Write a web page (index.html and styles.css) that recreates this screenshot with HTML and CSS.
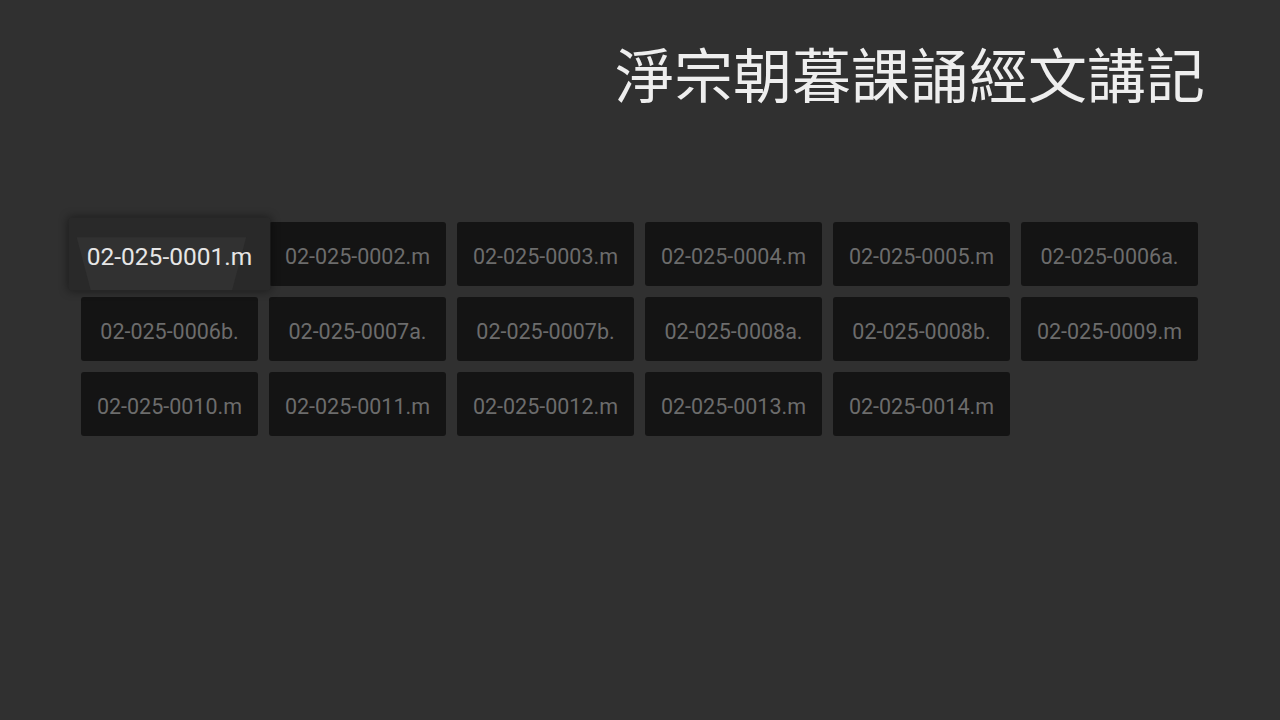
FILE: index.html
```html
<!DOCTYPE html>
<html lang="zh-Hant">
<head>
<meta charset="utf-8">
<title>淨宗朝暮課誦經文講記</title>
<link rel="stylesheet" href="styles.css">
</head>
<body>
<header class="header">
  <h1 class="title">淨宗朝暮課誦經文講記</h1>
</header>
<main class="grid">
  <div class="card card--focused"><span class="card__label">02-025-0001.m</span></div>
  <div class="card"><span class="card__label">02-025-0002.m</span></div>
  <div class="card"><span class="card__label">02-025-0003.m</span></div>
  <div class="card"><span class="card__label">02-025-0004.m</span></div>
  <div class="card"><span class="card__label">02-025-0005.m</span></div>
  <div class="card"><span class="card__label">02-025-0006a.</span></div>
  <div class="card"><span class="card__label">02-025-0006b.</span></div>
  <div class="card"><span class="card__label">02-025-0007a.</span></div>
  <div class="card"><span class="card__label">02-025-0007b.</span></div>
  <div class="card"><span class="card__label">02-025-0008a.</span></div>
  <div class="card"><span class="card__label">02-025-0008b.</span></div>
  <div class="card"><span class="card__label">02-025-0009.m</span></div>
  <div class="card"><span class="card__label">02-025-0010.m</span></div>
  <div class="card"><span class="card__label">02-025-0011.m</span></div>
  <div class="card"><span class="card__label">02-025-0012.m</span></div>
  <div class="card"><span class="card__label">02-025-0013.m</span></div>
  <div class="card"><span class="card__label">02-025-0014.m</span></div>
</main>
</body>
</html>
```
FILE: styles.css
```css
html, body {
  margin: 0;
  padding: 0;
  background: #303030;
  width: 1280px;
  height: 720px;
  overflow: hidden;
}

body {
  font-family: Roboto, "Noto Sans", sans-serif;
}

.header {
  padding: 33px 75px 0 0;
  text-align: right;
}

.title {
  margin: 0;
  font-family: "Noto Sans CJK TC", "Noto Sans CJK SC", sans-serif;
  font-weight: 400;
  font-size: 59px;
  line-height: 80px;
  color: #eeeeee;
}

.grid {
  margin-top: 109px;
  padding-left: 81px;
  display: grid;
  grid-template-columns: repeat(6, 177px);
  grid-auto-rows: 64px;
  column-gap: 11px;
  row-gap: 11px;
}

.card {
  position: relative;
  background: #141414;
  border-radius: 3px;
  display: flex;
  align-items: center;
  justify-content: center;
  padding-top: 4px;
  box-sizing: border-box;
  overflow: hidden;
}

.card__label {
  position: relative;
  font-size: 21.5px;
  color: #6c6c6c;
  white-space: nowrap;
}

.card--focused {
  background: #292929;
  transform: scale(1.14);
  z-index: 2;
  box-shadow: 0 0 8px rgba(0, 0, 0, 0.45);
}

.card--focused::before {
  content: "";
  position: absolute;
  inset: 0;
  background: #313131;
  clip-path: polygon(4% 27%, 88% 27%, 81% 100%, 11% 100%);
}

.card--focused .card__label {
  color: #e6e6e6;
}
```
